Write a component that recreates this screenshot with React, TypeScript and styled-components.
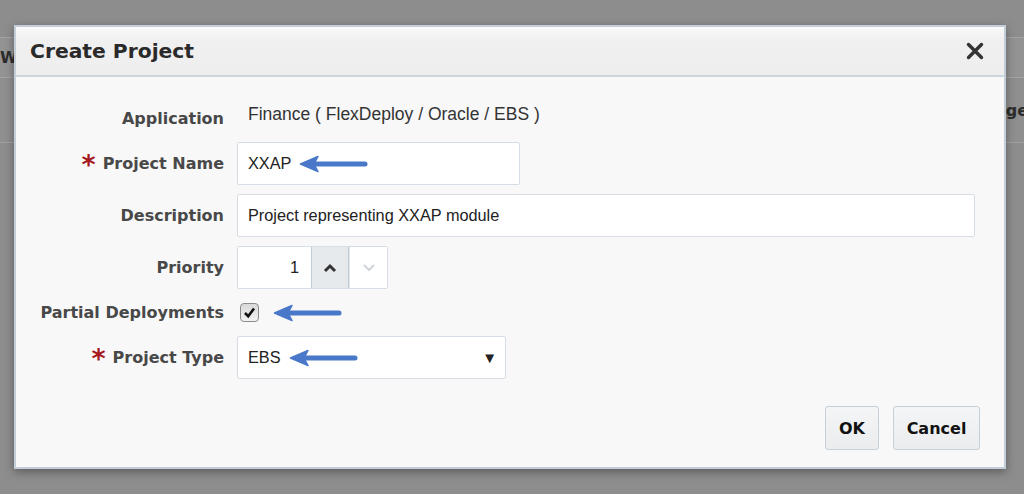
import React, { useState } from "react";
import styled, { createGlobalStyle } from "styled-components";

const GlobalStyle = createGlobalStyle`
  html, body {
    margin: 0;
    padding: 0;
    width: 1024px;
    height: 494px;
    overflow: hidden;
    background: #8d8d8d;
  }
`;

const Page = styled.div`
  position: relative;
  width: 1024px;
  height: 494px;
  overflow: hidden;
  display: flex;
  flex-direction: column;
  font-family: "DejaVu Sans", sans-serif;
`;

const BackBand = styled.div<{ $h: number; $bg: string; $align?: string }>`
  height: ${(p) => p.$h}px;
  background: ${(p) => p.$bg};
  border-bottom: 1px solid #a3a3a3;
  display: flex;
  align-items: center;
  justify-content: ${(p) => p.$align || "flex-start"};
  font-weight: bold;
  font-size: 16px;
  color: #2c2c2c;
  white-space: nowrap;
`;

const BackText = styled.span<{ $ml?: number; $mr?: number }>`
  margin-left: ${(p) => p.$ml || 0}px;
  margin-right: ${(p) => p.$mr || 0}px;
`;

const Dialog = styled.div`
  position: absolute;
  left: 14px;
  top: 25px;
  width: 992px;
  height: 444px;
  box-sizing: border-box;
  border: 2px solid #c4ced8;
  background: #f8f8f8;
  box-shadow: 0 3px 9px rgba(0, 0, 0, 0.35);
  display: flex;
  flex-direction: column;
`;

const Header = styled.div`
  height: 50px;
  box-sizing: border-box;
  display: flex;
  align-items: center;
  justify-content: space-between;
  padding: 0 18px 0 14px;
  background: linear-gradient(#fafafa 0%, #f0f0f0 25%, #eeeeee 100%);
  border-bottom: 2px solid #ccd6df;
`;

const Title = styled.h1`
  margin: 0;
  font-family: "DejaVu Sans", sans-serif;
  font-weight: bold;
  font-size: 20.3px;
  color: #2a2a2a;
`;

const CloseButton = styled.button`
  border: none;
  background: none;
  padding: 0;
  width: 22px;
  height: 22px;
  display: flex;
  align-items: center;
  justify-content: center;
  cursor: pointer;
`;

const Form = styled.div`
  display: grid;
  grid-template-columns: 192px 1fr;
  column-gap: 13px;
  row-gap: 9px;
  padding: 26px 29px 0 16px;
`;

const Label = styled.div<{ $h?: number }>`
  height: ${(p) => p.$h || 43}px;
  display: flex;
  align-items: center;
  justify-content: flex-end;
  font-weight: bold;
  font-size: 16px;
  color: #484848;
  white-space: nowrap;
`;

const Star = styled.span`
  color: #a5191f;
  font-size: 27px;
  line-height: 1;
  margin-right: 7px;
  position: relative;
  top: 1px;
`;

const Value = styled.div`
  display: flex;
  align-items: center;
  height: 30px;
  padding-left: 11px;
  padding-bottom: 8px;
  box-sizing: border-box;
  font-family: "Liberation Sans", Arial, sans-serif;
  font-size: 17.5px;
  color: #333;
`;

const Field = styled.div<{ $w?: number }>`
  width: ${(p) => (p.$w ? `${p.$w}px` : "100%")};
  height: 43px;
  box-sizing: border-box;
  border: 1px solid #d6dde4;
  border-radius: 2px;
  background: #fff;
  display: flex;
  align-items: center;
  padding: 0 10px;
  font-family: "Liberation Sans", Arial, sans-serif;
  font-size: 16.3px;
  color: #222;
`;

const Spinner = styled.div`
  display: flex;
  height: 43px;
  width: 151px;
  box-sizing: border-box;
  border: 1px solid #d6dde4;
  border-radius: 2px;
  background: #fff;
`;

const SpinValue = styled.div`
  width: 73px;
  display: flex;
  align-items: center;
  justify-content: flex-end;
  padding-right: 12px;
  box-sizing: border-box;
  font-family: "Liberation Sans", Arial, sans-serif;
  font-size: 16.3px;
  color: #222;
`;

const SpinButton = styled.button<{ $active?: boolean }>`
  width: 38px;
  border: none;
  border-left: 1px solid ${(p) => (p.$active ? "#c2ccd6" : "#e2e7ec")};
  border-right: ${(p) => (p.$active ? "1px solid #c2ccd6" : "none")};
  background: ${(p) => (p.$active ? "#e7eaed" : "#fff")};
  display: flex;
  align-items: center;
  justify-content: center;
  padding: 0;
`;

const CheckRow = styled.div`
  height: 29px;
  display: flex;
  align-items: center;
  padding-left: 3px;
`;

const CheckBox = styled.div`
  width: 19px;
  height: 19px;
  box-sizing: border-box;
  border: 1px solid #8c8c8c;
  border-radius: 4px;
  background: linear-gradient(#d9d9d9, #f2f2f2);
  display: flex;
  align-items: center;
  justify-content: center;
  margin-right: 14px;
`;

const Select = styled(Field)`
  justify-content: space-between;
  padding-right: 8px;
`;

const Caret = styled.span`
  font-size: 15px;
  color: #222;
`;

const Lead = styled.div`
  display: flex;
  align-items: center;
`;

const Footer = styled.div`
  display: flex;
  justify-content: flex-end;
  gap: 14px;
  margin-top: 27px;
  padding-right: 24px;
`;

const Button = styled.button<{ $w: number }>`
  width: ${(p) => p.$w}px;
  height: 44px;
  border: 1px solid #c5d0da;
  border-radius: 3px;
  background: linear-gradient(#f4f5f6, #eaecee);
  font-family: "DejaVu Sans", sans-serif;
  font-weight: bold;
  font-size: 16px;
  color: #111;
  padding: 0;
  cursor: pointer;
`;

const Arrow = ({ gap = 8 }: { gap?: number }) => (
  <svg width="70" height="18" viewBox="0 0 70 18" style={{ marginLeft: gap }}>
    <line
      x1="14"
      y1="9"
      x2="66"
      y2="9"
      stroke="#4a78c9"
      strokeWidth="5"
      strokeLinecap="round"
    />
    <path
      d="M1.5 9 L19 1.5 L15 9 L19 16.5 Z"
      fill="#4a78c9"
      stroke="#4a78c9"
      strokeLinejoin="round"
      strokeWidth="1.5"
    />
  </svg>
);

const Chevron = ({ up, color }: { up: boolean; color: string }) => (
  <svg width="14" height="10" viewBox="0 0 14 10">
    <path
      d={up ? "M2 8 L7 3 L12 8" : "M2 2 L7 7 L12 2"}
      fill="none"
      stroke={color}
      strokeWidth={up ? 3 : 2}
    />
  </svg>
);

export default function App() {
  const [priority, setPriority] = useState(1);
  const [partial, setPartial] = useState(true);

  return (
    <Page>
      <GlobalStyle />
      <BackBand $h={37} $bg="#8d8d8d" />
      <BackBand $h={39} $bg="#939393">
        <BackText>Welcome</BackText>
      </BackBand>
      <BackBand $h={64} $bg="#8f8f8f" $align="flex-end">
        <BackText $mr={-4}>Change</BackText>
      </BackBand>

      <Dialog>
        <Header>
          <Title>Create Project</Title>
          <CloseButton aria-label="Close">
            <svg width="20" height="20" viewBox="0 0 20 20">
              <path
                d="M3.5 3.5 L16.5 16.5 M16.5 3.5 L3.5 16.5"
                stroke="#333"
                strokeWidth="3.4"
                strokeLinecap="round"
              />
            </svg>
          </CloseButton>
        </Header>

        <Form>
          <Label $h={30}>Application</Label>
          <Value>Finance ( FlexDeploy / Oracle / EBS )</Value>

          <Label>
            <Star>*</Star>Project Name
          </Label>
          <Field $w={283}>
            XXAP
            <Arrow />
          </Field>

          <Label>Description</Label>
          <Field>Project representing XXAP module</Field>

          <Label>Priority</Label>
          <Spinner>
            <SpinValue>{priority}</SpinValue>
            <SpinButton $active onClick={() => setPriority(priority + 1)}>
              <Chevron up color="#333" />
            </SpinButton>
            <SpinButton onClick={() => setPriority(Math.max(1, priority - 1))}>
              <Chevron up={false} color="#cfd5db" />
            </SpinButton>
          </Spinner>

          <Label $h={29}>Partial Deployments</Label>
          <CheckRow onClick={() => setPartial(!partial)}>
            <CheckBox>
              {partial && (
                <svg width="13" height="13" viewBox="0 0 13 13">
                  <path
                    d="M2 7 L5.2 10.2 L11 2.5"
                    fill="none"
                    stroke="#111"
                    strokeWidth="2.6"
                  />
                </svg>
              )}
            </CheckBox>
            <Arrow gap={0} />
          </CheckRow>

          <Label>
            <Star>*</Star>Project Type
          </Label>
          <Select $w={269}>
            <Lead>
              EBS
              <Arrow />
            </Lead>
            <Caret>▼</Caret>
          </Select>
        </Form>

        <Footer>
          <Button $w={54}>OK</Button>
          <Button $w={87}>Cancel</Button>
        </Footer>
      </Dialog>
    </Page>
  );
}
